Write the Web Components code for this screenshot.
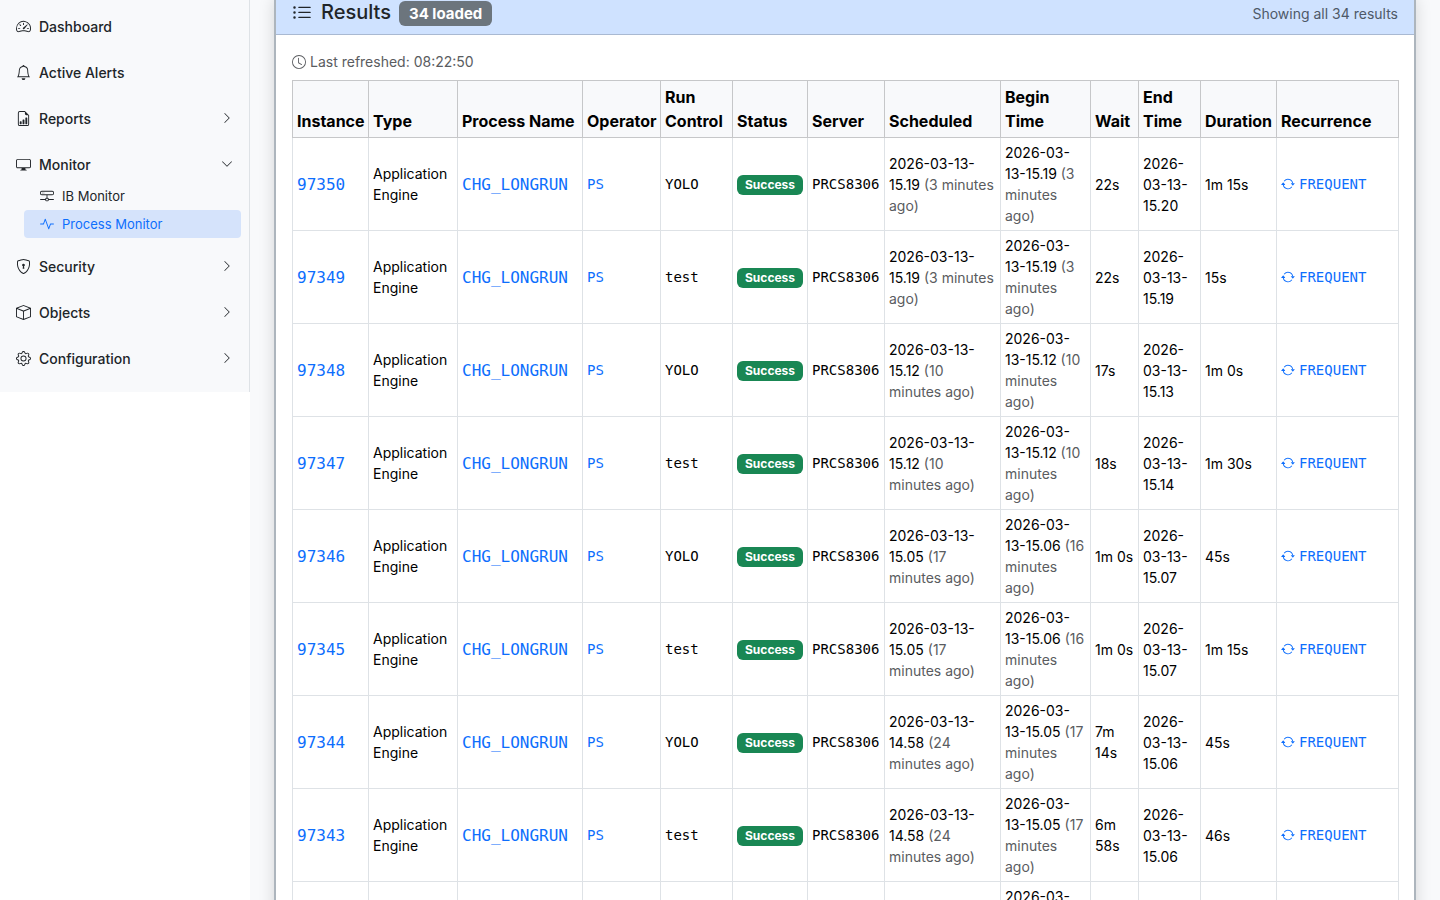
<!DOCTYPE html>
<html lang="en">
<head>
<meta charset="utf-8">
<title>Process Monitor</title>
<style>
  html { scrollbar-width: none; }
  body { margin: 0; background: #fff; color: #212529; font: 14px/21px Inter, "Liberation Sans", sans-serif; --surface: #f8f9fb; }
</style>
</head>
<body>
<app-shell>
  <side-nav slot="nav">
    <nav-item icon="speedometer" href="#dashboard">Dashboard</nav-item>
    <nav-item icon="bell" href="#alerts">Active Alerts</nav-item>
    <nav-item icon="report" group>Reports</nav-item>
    <nav-item icon="display" group open>Monitor
      <nav-subitem slot="sub" icon="network" href="#ib">IB Monitor</nav-subitem>
      <nav-subitem slot="sub" icon="activity" href="#process" active>Process Monitor</nav-subitem>
    </nav-item>
    <nav-item icon="shield" group>Security</nav-item>
    <nav-item icon="box" group>Objects</nav-item>
    <nav-item icon="gear" group>Configuration</nav-item>
  </side-nav>
  <result-card>
    <span slot="title">Results</span>
    <span slot="count">34 loaded</span>
    <span slot="summary">Showing all 34 results</span>
    <refresh-note time="08:22:50"></refresh-note>
    <process-table></process-table>
  </result-card>
</app-shell>

<script>
const ICONS = {
  speedometer: ['M8 4a.5.5 0 0 1 .5.5V6a.5.5 0 0 1-1 0V4.5A.5.5 0 0 1 8 4M3.732 5.732a.5.5 0 0 1 .707 0l.915.914a.5.5 0 1 1-.708.708l-.914-.915a.5.5 0 0 1 0-.707M2 10a.5.5 0 0 1 .5-.5h1.586a.5.5 0 0 1 0 1H2.5A.5.5 0 0 1 2 10m9.5 0a.5.5 0 0 1 .5-.5h1.5a.5.5 0 0 1 0 1H12a.5.5 0 0 1-.5-.5m.754-4.246a.39.39 0 0 0-.527-.02L7.547 9.31a.91.91 0 1 0 1.302 1.258l3.434-4.297a.39.39 0 0 0-.029-.518z', 'M0 10a8 8 0 1 1 15.547 2.661c-.442 1.253-1.845 1.602-2.932 1.25C11.309 13.488 9.475 13 8 13c-1.474 0-3.31.488-4.615.911-1.087.352-2.49.003-2.932-1.25A8 8 0 0 1 0 10m8-7a7 7 0 0 0-6.603 9.329c.203.575.923.876 1.68.63C4.397 12.533 6.358 12 8 12s3.604.532 4.923.96c.757.245 1.477-.056 1.68-.631A7 7 0 0 0 8 3'],
  bell: ['M8 16a2 2 0 0 0 2-2H6a2 2 0 0 0 2 2M8 1.918l-.797.161A4 4 0 0 0 4 6c0 .628-.134 2.197-.459 3.742-.16.767-.376 1.566-.663 2.258h10.244c-.287-.692-.502-1.49-.663-2.258C12.134 8.197 12 6.628 12 6a4 4 0 0 0-3.203-3.92zM14.22 12c.223.447.481.801.78 1H1c.299-.199.557-.553.78-1C2.68 10.2 3 6.88 3 6c0-2.42 1.72-4.44 4.005-4.901a1 1 0 1 1 1.99 0A5 5 0 0 1 13 6c0 .88.32 4.2 1.22 6'],
  report: ['M10 13.5a.5.5 0 0 0 .5.5h1a.5.5 0 0 0 .5-.5v-6a.5.5 0 0 0-.5-.5h-1a.5.5 0 0 0-.5.5zm-2.5.5a.5.5 0 0 1-.5-.5v-4a.5.5 0 0 1 .5-.5h1a.5.5 0 0 1 .5.5v4a.5.5 0 0 1-.5.5zm-3 0a.5.5 0 0 1-.5-.5v-2a.5.5 0 0 1 .5-.5h1a.5.5 0 0 1 .5.5v2a.5.5 0 0 1-.5.5z', 'M14 14V4.5L9.5 0H4a2 2 0 0 0-2 2v12a2 2 0 0 0 2 2h8a2 2 0 0 0 2-2M9.5 3A1.5 1.5 0 0 0 11 4.5h2V14a1 1 0 0 1-1 1H4a1 1 0 0 1-1-1V2a1 1 0 0 1 1-1h5.5z'],
  display: ['M0 4s0-2 2-2h12s2 0 2 2v6s0 2-2 2h-4q0 1 .25 1.5H11a.5.5 0 0 1 0 1H5a.5.5 0 0 1 0-1h.75Q6 13 6 12H2s-2 0-2-2zm1.398-.855a.76.76 0 0 0-.254.302A1.5 1.5 0 0 0 1 4.01V10c0 .325.078.502.145.602q.105.156.302.254a1.5 1.5 0 0 0 .538.143L2.01 11H14c.325 0 .502-.078.602-.145a.76.76 0 0 0 .254-.302 1.5 1.5 0 0 0 .143-.538L15 9.99V4c0-.325-.078-.502-.145-.602a.76.76 0 0 0-.302-.254A1.5 1.5 0 0 0 13.99 3H2c-.325 0-.502.078-.602.145'],
  network: ['M4.5 5a.5.5 0 1 0 0-1 .5.5 0 0 0 0 1M3 4.5a.5.5 0 1 1-1 0 .5.5 0 0 1 1 0', 'M0 4a2 2 0 0 1 2-2h12a2 2 0 0 1 2 2v1a2 2 0 0 1-2 2H8.5v3a1.5 1.5 0 0 1 1.5 1.5h5.5a.5.5 0 0 1 0 1H10A1.5 1.5 0 0 1 8.5 14h-1A1.5 1.5 0 0 1 6 12.5H.5a.5.5 0 0 1 0-1H6A1.5 1.5 0 0 1 7.5 10V7H2a2 2 0 0 1-2-2zm1 0v1a1 1 0 0 0 1 1h12a1 1 0 0 0 1-1V4a1 1 0 0 0-1-1H2a1 1 0 0 0-1 1m6 7.5v1a.5.5 0 0 0 .5.5h1a.5.5 0 0 0 .5-.5v-1a.5.5 0 0 0-.5-.5h-1a.5.5 0 0 0-.5.5'],
  activity: ['M6 2a.5.5 0 0 1 .47.33L10 12.036l1.53-4.208A.5.5 0 0 1 12 7.5h3.5a.5.5 0 0 1 0 1h-3.15l-1.88 5.17a.5.5 0 0 1-.94 0L6 3.964 4.47 8.171A.5.5 0 0 1 4 8.5H.5a.5.5 0 0 1 0-1h3.15l1.88-5.17A.5.5 0 0 1 6 2'],
  shield: ['M5.338 1.59a61 61 0 0 0-2.837.856.48.48 0 0 0-.328.39c-.554 4.157.726 7.19 2.253 9.188a10.7 10.7 0 0 0 2.287 2.233c.346.244.652.42.893.533q.18.085.293.118a1 1 0 0 0 .101.025 1 1 0 0 0 .1-.025q.114-.034.294-.118c.24-.113.547-.29.893-.533a10.7 10.7 0 0 0 2.287-2.233c1.527-1.997 2.807-5.031 2.253-9.188a.48.48 0 0 0-.328-.39c-.651-.213-1.75-.56-2.837-.855C9.552 1.29 8.531 1.067 8 1.067c-.53 0-1.552.223-2.662.524zM5.072.56C6.157.265 7.31 0 8 0s1.843.265 2.928.56c1.11.3 2.229.655 2.887.87a1.54 1.54 0 0 1 1.044 1.262c.596 4.477-.787 7.795-2.465 9.99a11.8 11.8 0 0 1-2.517 2.453 7 7 0 0 1-1.048.625c-.28.132-.581.24-.829.24s-.548-.108-.829-.24a7 7 0 0 1-1.048-.625 11.8 11.8 0 0 1-2.517-2.453C1.928 10.487.545 7.169 1.141 2.692A1.54 1.54 0 0 1 2.185 1.43 63 63 0 0 1 5.072.56', 'M9.5 6.5a1.5 1.5 0 0 1-1 1.415l.385 1.99a.5.5 0 0 1-.491.595h-.788a.5.5 0 0 1-.49-.595l.384-1.99a1.5 1.5 0 1 1 2-1.415'],
  box: ['M8.186 1.113a.5.5 0 0 0-.372 0L1.846 3.5 8 5.961 14.154 3.5zM15 4.239l-6.5 2.6v7.922l6.5-2.6V4.24zM7.5 14.762V6.838L1 4.239v7.923zM7.443.184a1.5 1.5 0 0 1 1.114 0l7.129 2.852A.5.5 0 0 1 16 3.5v8.662a1 1 0 0 1-.629.928l-7.185 2.874a.5.5 0 0 1-.372 0L.63 13.09a1 1 0 0 1-.63-.928V3.5a.5.5 0 0 1 .314-.464z'],
  gear: ['M8 4.754a3.246 3.246 0 1 0 0 6.492 3.246 3.246 0 0 0 0-6.492M5.754 8a2.246 2.246 0 1 1 4.492 0 2.246 2.246 0 0 1-4.492 0', 'M9.796 1.343c-.527-1.79-3.065-1.79-3.592 0l-.094.319a.873.873 0 0 1-1.255.52l-.292-.16c-1.64-.892-3.433.902-2.54 2.541l.159.292a.873.873 0 0 1-.52 1.255l-.319.094c-1.79.527-1.79 3.065 0 3.592l.319.094a.873.873 0 0 1 .52 1.255l-.16.292c-.892 1.64.901 3.434 2.541 2.54l.292-.159a.873.873 0 0 1 1.255.52l.094.319c.527 1.79 3.065 1.79 3.592 0l.094-.319a.873.873 0 0 1 1.255-.52l.292.16c1.64.893 3.434-.902 2.54-2.541l-.159-.292a.873.873 0 0 1 .52-1.255l.319-.094c1.79-.527 1.79-3.065 0-3.592l-.319-.094a.873.873 0 0 1-.52-1.255l.16-.292c.893-1.64-.902-3.433-2.541-2.54l-.292.159a.873.873 0 0 1-1.255-.52zm-2.633.283c.246-.835 1.428-.835 1.674 0l.094.319a1.873 1.873 0 0 0 2.693 1.115l.291-.16c.764-.415 1.6.42 1.184 1.185l-.159.292a1.873 1.873 0 0 0 1.116 2.692l.318.094c.835.246.835 1.428 0 1.674l-.319.094a1.873 1.873 0 0 0-1.115 2.693l.16.291c.415.764-.42 1.6-1.185 1.184l-.291-.159a1.873 1.873 0 0 0-2.693 1.116l-.094.318c-.246.835-1.428.835-1.674 0l-.094-.319a1.873 1.873 0 0 0-2.692-1.115l-.292.16c-.764.415-1.6-.42-1.184-1.185l.159-.291A1.873 1.873 0 0 0 1.945 8.93l-.319-.094c-.835-.246-.835-1.428 0-1.674l.319-.094A1.873 1.873 0 0 0 3.06 4.377l-.16-.292c-.415-.764.42-1.6 1.185-1.184l.292.159a1.873 1.873 0 0 0 2.692-1.115z'],
  list: ['M5 11.5a.5.5 0 0 1 .5-.5h9a.5.5 0 0 1 0 1h-9a.5.5 0 0 1-.5-.5m0-4a.5.5 0 0 1 .5-.5h9a.5.5 0 0 1 0 1h-9a.5.5 0 0 1-.5-.5m0-4a.5.5 0 0 1 .5-.5h9a.5.5 0 0 1 0 1h-9a.5.5 0 0 1-.5-.5m-3 1a1 1 0 1 0 0-2 1 1 0 0 0 0 2m0 4a1 1 0 1 0 0-2 1 1 0 0 0 0 2m0 4a1 1 0 1 0 0-2 1 1 0 0 0 0 2'],
  clock: ['M8 3.5a.5.5 0 0 0-1 0V9a.5.5 0 0 0 .252.434l3.5 2a.5.5 0 0 0 .496-.868L8 8.71z', 'M8 16A8 8 0 1 0 8 0a8 8 0 0 0 0 16m7-8A7 7 0 1 1 1 8a7 7 0 0 1 14 0'],
  repeat: ['M11.534 7h3.932a.25.25 0 0 1 .192.41l-1.966 2.36a.25.25 0 0 1-.384 0l-1.966-2.36a.25.25 0 0 1 .192-.41m-11 2h3.932a.25.25 0 0 0 .192-.41L2.692 6.23a.25.25 0 0 0-.384 0L.342 8.59A.25.25 0 0 0 .534 9', 'M8 3c-1.552 0-2.94.707-3.857 1.818a.5.5 0 1 1-.771-.636A6.002 6.002 0 0 1 13.917 7H12.9A5 5 0 0 0 8 3M3.1 9a5.002 5.002 0 0 0 8.757 2.182.5.5 0 1 1 .771.636A6.002 6.002 0 0 1 2.083 9z'],
  right: ['M4.646 1.646a.5.5 0 0 1 .708 0l6 6a.5.5 0 0 1 0 .708l-6 6a.5.5 0 0 1-.708-.708L10.293 8 4.646 2.354a.5.5 0 0 1 0-.708'],
  down: ['M1.646 4.646a.5.5 0 0 1 .708 0L8 10.293l5.646-5.647a.5.5 0 0 1 .708.708l-6 6a.5.5 0 0 1-.708 0l-6-6a.5.5 0 0 1 0-.708']
};

function define(name, render) {
  customElements.define(name, class extends HTMLElement {
    constructor() { super(); this.attachShadow({ mode: 'open' }); }
    connectedCallback() { this.shadowRoot.innerHTML = render(this); }
  });
}

define('ui-icon', el => `
  <style>
    :host { display: inline-block; flex: none; width: var(--icon-size, 14px); height: var(--icon-size, 14px); }
    svg { display: block; width: 100%; height: 100%; fill: currentColor; }
  </style>
  <svg viewBox="0 0 16 16" aria-hidden="true">${ICONS[el.getAttribute('name')].map(d => `<path fill-rule="evenodd" d="${d}"/>`).join('')}</svg>`);

define('app-shell', () => `
  <style>
    :host { display: grid; grid-template-columns: 250px minmax(0, 1fr); align-items: start; }
    main { background: var(--surface); padding: 0 24px 24px; min-height: 100vh; box-sizing: border-box; }
  </style>
  <slot name="nav"></slot>
  <main><slot></slot></main>`);

define('side-nav', () => `
  <style>
    :host { display: block; background: var(--surface); border-right: 1px solid #dee2e6; }
    nav { display: flex; flex-direction: column; gap: 10px; padding: 8px 8px 16px 0; }
  </style>
  <nav aria-label="Main"><slot></slot></nav>`);

define('nav-item', el => {
  const icon = `<ui-icon name="${el.getAttribute('icon')}"></ui-icon><span><slot></slot></span>`;
  const open = el.hasAttribute('open');
  return `
  <style>
    :host { display: block; --icon-size: 15px; }
    a, button { display: flex; align-items: center; gap: 8px; width: 100%; height: 36px; box-sizing: border-box; padding: 0 8px 0 16px; border: 0; background: none; color: #212529; font: inherit; font-weight: 500; text-align: left; text-decoration: none; }
    span { flex: 1; }
    .chevron { --icon-size: 12px; }
    .sub { padding-left: 24px; }
  </style>
  ${el.hasAttribute('group')
    ? `<button type="button" aria-expanded="${open}">${icon}<ui-icon class="chevron" name="${open ? 'down' : 'right'}"></ui-icon></button>`
    : `<a href="${el.getAttribute('href')}">${icon}</a>`}
  ${open ? '<div class="sub"><slot name="sub"></slot></div>' : ''}`;
});

define('nav-subitem', el => `
  <style>
    :host { display: block; --icon-size: 14px; font-size: 13px; }
    a { display: flex; align-items: center; gap: 8px; height: 28px; padding: 0 16px; border-radius: 4px; color: #212529; text-decoration: none; }
    :host([active]) a { background: #d5e3fb; color: #0d6efd; }
  </style>
  <a href="${el.getAttribute('href')}"><ui-icon name="${el.getAttribute('icon')}"></ui-icon><slot></slot></a>`);

define('result-card', () => `
  <style>
    :host { display: block; margin-top: -10px; background: #fff; border: 2px solid #adb5bd; border-radius: 6px; box-shadow: 0 8px 16px rgba(0, 0, 0, .15); }
    header { display: flex; justify-content: space-between; align-items: center; height: 42px; padding: 0 16px; background: #cfe2ff; border-bottom: 1px solid #a9b9d2; }
    h5 { display: flex; align-items: baseline; margin: 0; font-size: 20px; line-height: 24px; font-weight: 500; }
    ui-icon { --icon-size: 20px; align-self: center; margin-right: 9px; }
    .count { margin-left: 8px; padding: 0 10px; border-radius: 6px; background: #6c757d; color: #fff; font-size: 15px; line-height: 25px; font-weight: 700; }
    .summary { color: #4e5968; }
    .body { display: grid; gap: 8px; padding: 16px; }
  </style>
  <header>
    <h5><ui-icon name="list"></ui-icon><slot name="title"></slot><span class="count"><slot name="count"></slot></span></h5>
    <span class="summary"><slot name="summary"></slot></span>
  </header>
  <div class="body"><slot></slot></div>`);

define('refresh-note', el => `
  <style>
    :host { display: flex; align-items: center; gap: 4px; color: #5a5c60; }
  </style>
  <ui-icon name="clock"></ui-icon><span>Last refreshed: ${el.getAttribute('time')}</span>`);

define('status-badge', () => `
  <style>
    :host { display: inline-block; padding: 0 8px; border-radius: 6px; background: #198754; color: #fff; font-size: 12px; line-height: 20px; font-weight: 700; }
  </style>
  <slot></slot>`);

const COLUMNS = [['Instance', 76], ['Type', 89], ['Process Name', 125], ['Operator', 78], ['Run Control', 72], ['Status', 75], ['Server', 77], ['Scheduled', 116], ['Begin Time', 90], ['Wait', 48], ['End Time', 62], ['Duration', 76], ['Recurrence', 122]];
const ROWS = [
  ['97350', 'YOLO', '15.19', '3', '15.19', '3', '22s', '15.20', '1m 15s'],
  ['97349', 'test', '15.19', '3', '15.19', '3', '22s', '15.19', '15s'],
  ['97348', 'YOLO', '15.12', '10', '15.12', '10', '17s', '15.13', '1m 0s'],
  ['97347', 'test', '15.12', '10', '15.12', '10', '18s', '15.14', '1m 30s'],
  ['97346', 'YOLO', '15.05', '17', '15.06', '16', '1m 0s', '15.07', '45s'],
  ['97345', 'test', '15.05', '17', '15.06', '16', '1m 0s', '15.07', '1m 15s'],
  ['97344', 'YOLO', '14.58', '24', '15.05', '17', '7m 14s', '15.06', '45s'],
  ['97343', 'test', '14.58', '24', '15.05', '17', '6m 58s', '15.06', '46s'],
  ['97342', 'YOLO', '14.51', '31', '14.58', '24', '7m 0s', '14.59', '45s']
];
const day = '2026-03-13-';
const ago = n => `<small>(${n} minutes ago)</small>`;

define('process-table', () => `
  <style>
    :host { display: block; }
    table { width: 100%; table-layout: fixed; border-collapse: collapse; color: #000; }
    th, td { padding: 4px; border: 1px solid #dee2e6; text-align: left; vertical-align: middle; }
    th { background: var(--surface); border-color: #c6c7c9; font-size: 16px; line-height: 24px; font-weight: 700; vertical-align: bottom; }
    a { color: #0d6efd; text-decoration: none; }
    small { color: #5a5c60; font-size: 14px; }
    .mono { font-family: "DejaVu Sans Mono", monospace; white-space: nowrap; }
    .large { font-size: 16px; line-height: 24px; }
    .repeat { display: flex; align-items: center; gap: 4px; }
  </style>
  <table>
    <colgroup>${COLUMNS.map(c => `<col style="width:${c[1]}px">`).join('')}</colgroup>
    <thead><tr>${COLUMNS.map(c => `<th scope="col">${c[0]}</th>`).join('')}</tr></thead>
    <tbody>${ROWS.map(([id, run, sched, schedAgo, begin, beginAgo, wait, end, duration]) => `<tr>
      <td class="large"><a class="mono" href="#${id}">${id}</a></td>
      <td>Application Engine</td>
      <td class="large"><a class="mono" href="#process-${id}">CHG_LONGRUN</a></td>
      <td class="mono"><a href="#operator">PS</a></td>
      <td class="mono">${run}</td>
      <td><status-badge>Success</status-badge></td>
      <td class="mono">PRCS8306</td>
      <td>${day}${sched} ${ago(schedAgo)}</td>
      <td>${day}${begin} ${ago(beginAgo)}</td>
      <td>${wait}</td>
      <td>${day}${end}</td>
      <td>${duration}</td>
      <td class="mono"><a class="repeat" href="#recurrence"><ui-icon name="repeat"></ui-icon>FREQUENT</a></td>
    </tr>`).join('')}</tbody>
  </table>`);
</script>
</body>
</html>
